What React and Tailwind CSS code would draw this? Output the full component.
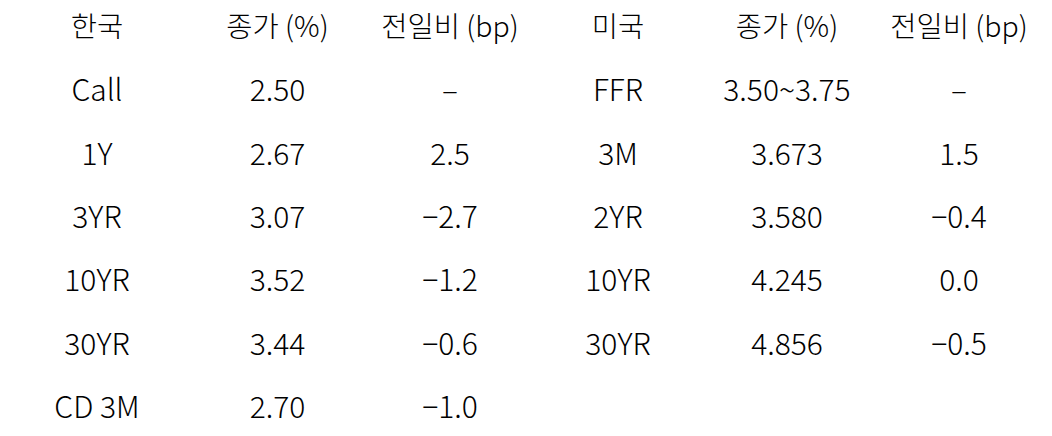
import React from "react";

const rows = [
  ["한국", "종가 (%)", "전일비 (bp)", "미국", "종가 (%)", "전일비 (bp)"],
  ["Call", "2.50", "–", "FFR", "3.50~3.75", "–"],
  ["1Y", "2.67", "2.5", "3M", "3.673", "1.5"],
  ["3YR", "3.07", "−2.7", "2YR", "3.580", "−0.4"],
  ["10YR", "3.52", "−1.2", "10YR", "4.245", "0.0"],
  ["30YR", "3.44", "−0.6", "30YR", "4.856", "−0.5"],
  ["CD 3M", "2.70", "−1.0", "", "", ""],
];

export default function App() {
  return (
    <div
      className="w-[1052px] h-[436px] bg-white text-black overflow-hidden"
      style={{ fontFamily: '"Noto Sans CJK KR", "Noto Sans", sans-serif' }}
    >
      <div className="grid grid-cols-[194px_167px_178px_158px_180px_164px] auto-rows-[63.3px] -mt-[6.5px] font-light leading-none">
        {rows.map((r, i) =>
          r.map((c, j) => (
            <div
              key={i + "-" + j}
              className={
                i === 0
                  ? "flex items-center justify-center whitespace-nowrap text-[28.5px]"
                  : "flex items-center justify-center whitespace-nowrap text-[30px]"
              }
            >
              {c}
            </div>
          ))
        )}
      </div>
    </div>
  );
}
